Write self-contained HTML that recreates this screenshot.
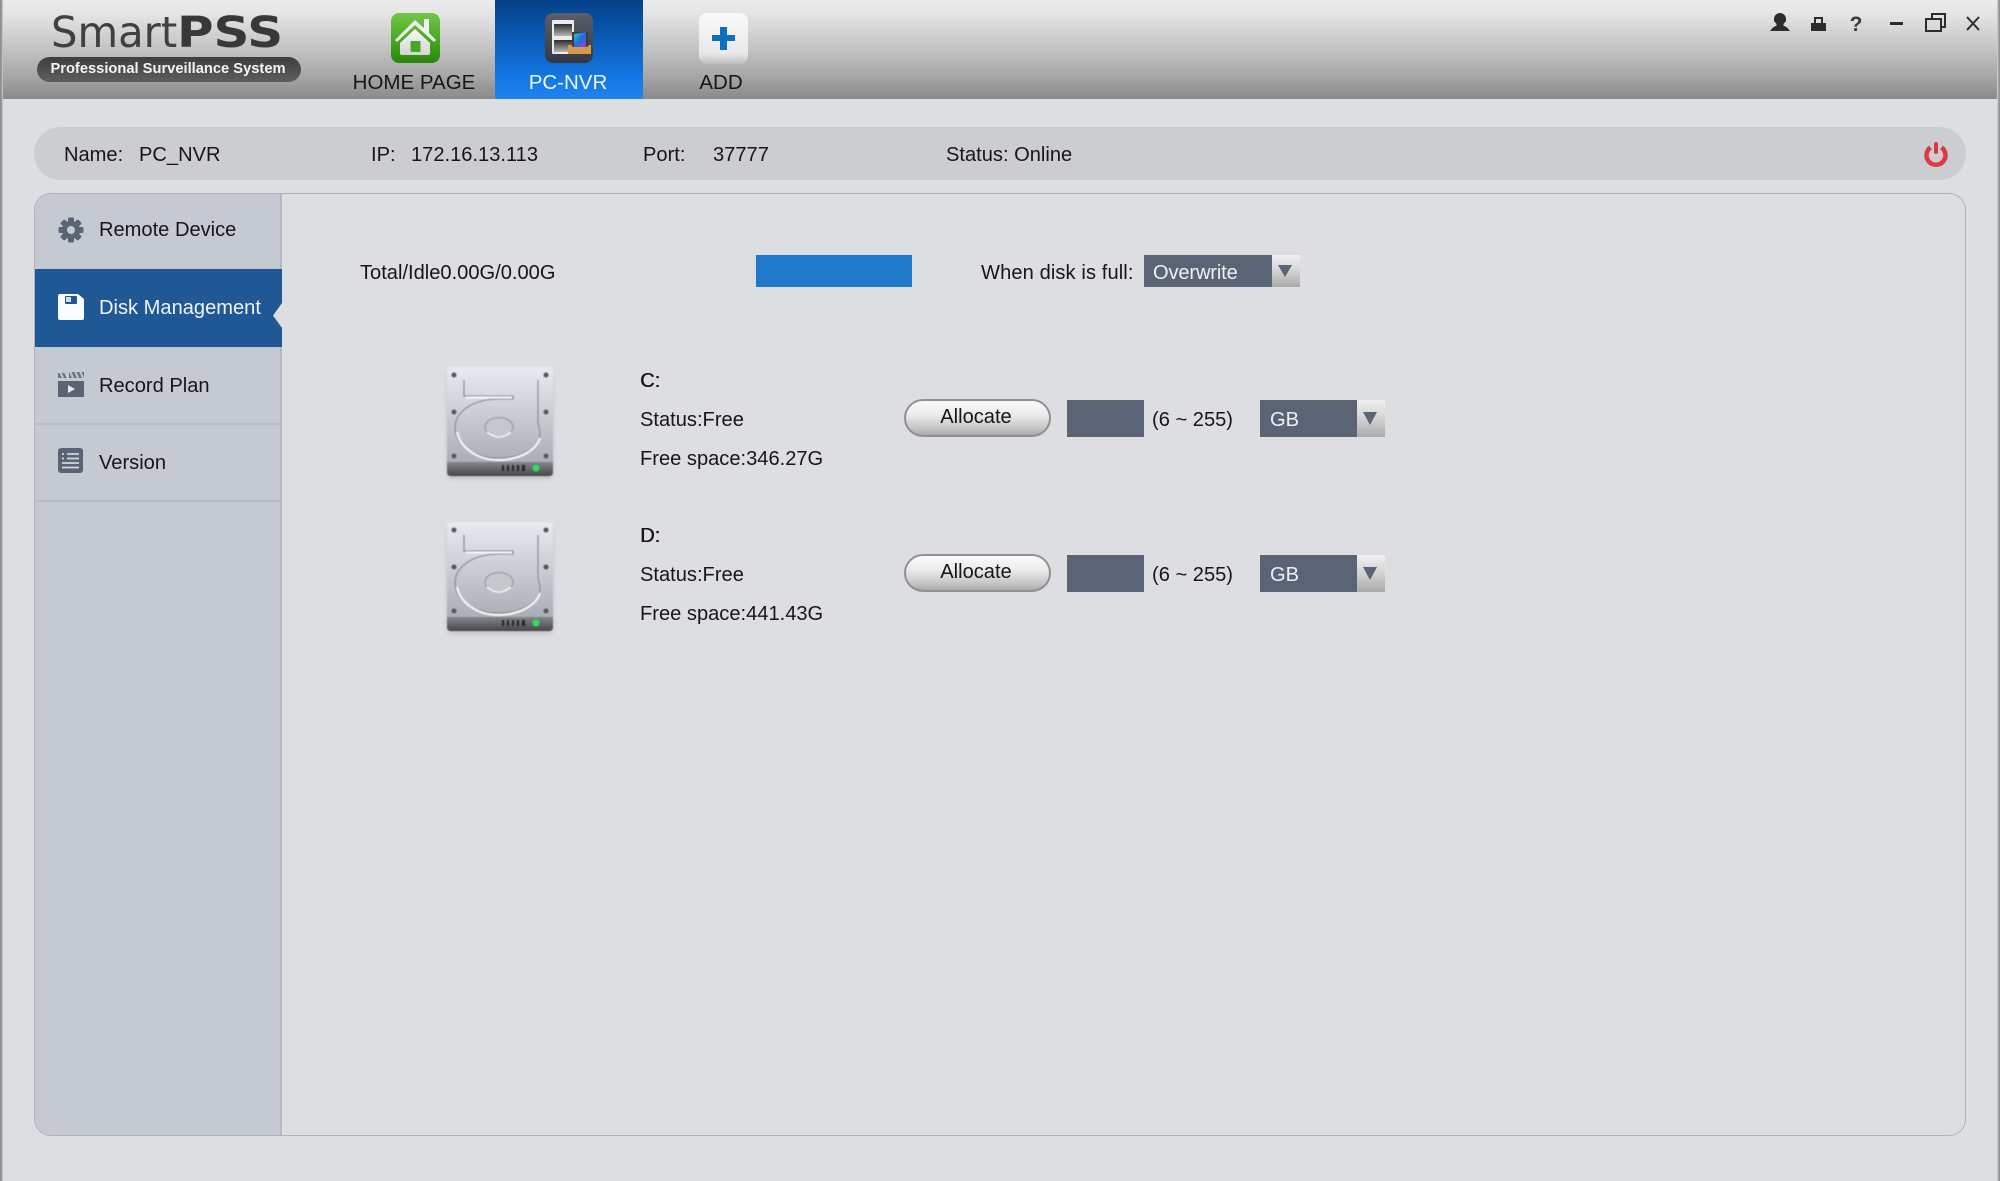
<!DOCTYPE html>
<html><head><meta charset="utf-8"><title>SmartPSS</title>
<style>
*{box-sizing:border-box}
html,body{margin:0;padding:0;width:2000px;height:1181px;overflow:hidden;background:#dcdee1}
body{font-family:"Liberation Sans",Arial,sans-serif;font-size:20.1px;color:#16161a;position:relative;filter:blur(.35px)}
.a{position:absolute;white-space:nowrap}
.t{line-height:24px}
#edgeL{left:0;top:0;width:3px;height:1181px;background:linear-gradient(90deg,#8a8c90,#9a9c9f 60%,#dcdee1)}
#edgeR{right:0;top:0;width:3px;height:1181px;background:linear-gradient(270deg,#8a8c90,#a0a2a5 50%,#dcdee1)}
#top{left:0;top:0;width:2000px;height:99px;background:linear-gradient(180deg,#ececec 0,#e4e4e4 15%,#c8c8c8 45%,#a6a6a6 80%,#909090 97%);border-bottom:3px solid #8b8c8e}
#tab{left:495px;top:0;width:148px;height:99px;background:linear-gradient(180deg,#044188 0,#0a5cb6 40%,#1478e6 80%,#2184ec 100%)}
.lbl{top:71px;line-height:24px;font-size:20.5px;transform:translateX(-50%);color:#15151a}
#info{left:34px;top:127px;width:1932px;height:53px;border-radius:27px;background:#cbcdd1}
#panel{left:34px;top:193px;width:1932px;height:943px;border:1px solid #aeb2b9;border-radius:17px;background:#dcdee1;overflow:hidden}
#side{left:0;top:0;width:247px;height:941px;background:#c5c9d2;border-right:2px solid #b4b9c2}
.sl{left:0;width:245px;height:2px;background:#b9bdc6}
#active{left:0;top:75px;width:247px;height:78px;background:#205795}
.bar{background:#5b6475}
.arr{background:linear-gradient(180deg,#f0f0f0,#d6d6d6 45%,#a9aaab)}
.btn{width:147px;height:38px;border-radius:19px;border:2px solid #8f9091;background:linear-gradient(180deg,#fafafa,#ececec 40%,#c5c5c5 80%,#a9a9a9);text-align:center;line-height:33px;color:#15151a;padding-right:3px}
.logo{font-family:"DejaVu Sans","Liberation Sans",sans-serif;font-size:43px;line-height:54px;color:#404042;transform-origin:0 0}
</style></head>
<body>
<div class="a" id="top"></div>
<div class="a" id="tab"></div>

<!-- Logo -->
<div class="a logo" style="left:51px;top:6px;transform:scaleX(.97)">Smart</div>
<div class="a logo" style="left:177px;top:6px;font-weight:700;color:#38383a;transform:scaleX(1.16)">PSS</div>
<div class="a" style="left:37px;top:57px;width:264px;height:25px;border-radius:13px;background:linear-gradient(180deg,#3e3e40,#5e5e60);color:#f4f4f4;font-weight:700;font-size:14.7px;line-height:25px;text-align:center;padding-right:2px">Professional Surveillance System</div>

<!-- Home icon -->
<svg class="a" style="left:390px;top:12px" width="52" height="54" viewBox="0 0 52 54">
<defs><linearGradient id="g" x1="0" y1="0" x2="0" y2="1"><stop offset="0" stop-color="#72c648"/><stop offset=".55" stop-color="#46a822"/><stop offset="1" stop-color="#2a860c"/></linearGradient>
<linearGradient id="h" x1="0" y1="0" x2="0" y2="1"><stop offset="0" stop-color="#f8f8f8"/><stop offset="1" stop-color="#d4d4d4"/></linearGradient></defs>
<rect x="1" y="1" width="49" height="50" rx="8" fill="url(#g)"/>
<path d="M5 28 L25 8 L34 16 L34 7 L39 7 L39 21 L46 28 L44 30 L25 13 L7 30Z" fill="#f0f0f0"/>
<path d="M10 31 L25 17 L40 31 V41 Q40 43 38 43 H12 Q10 43 10 41Z" fill="url(#h)"/>
<rect x="20.500" y="29" width="10" height="11" rx="1" fill="#47a828"/>
</svg>

<!-- PC-NVR icon -->
<svg class="a" style="left:543px;top:12px" width="52" height="54" viewBox="0 0 52 54">
<defs><linearGradient id="p" x1="0" y1="0" x2="0" y2="1"><stop offset="0" stop-color="#5a5e6a"/><stop offset="1" stop-color="#343842"/></linearGradient>
<linearGradient id="f" x1="0" y1="0" x2="1" y2="1"><stop offset="0" stop-color="#2fd0c8"/><stop offset=".5" stop-color="#1f6fe0"/><stop offset="1" stop-color="#a040c0"/></linearGradient>
<linearGradient id="d" x1="0" y1="0" x2="0" y2="1"><stop offset="0" stop-color="#2a2a2a"/><stop offset="1" stop-color="#b5b5b5"/></linearGradient></defs>
<rect x="2" y="1" width="48" height="50" rx="8" fill="url(#p)"/>
<rect x="9" y="8" width="22" height="34" rx="1" fill="#ececec"/>
<rect x="11" y="12" width="18" height="12" fill="url(#d)"/>
<rect x="11" y="28" width="18" height="12" fill="url(#d)"/>
<rect x="29" y="20" width="16" height="15" fill="#3a3d40"/>
<path d="M31 22 L43 20 V35 H31Z" fill="url(#f)"/>
<path d="M25 33 H28 L30 35 H44 L46 33 H48 V42 H25Z" fill="#d59a4a"/>
</svg>

<!-- Add icon -->
<svg class="a" style="left:698px;top:12px" width="52" height="54" viewBox="0 0 52 54">
<defs><linearGradient id="w" x1="0" y1="0" x2="0" y2="1"><stop offset="0" stop-color="#fafafa"/><stop offset=".8" stop-color="#e8e8e8"/><stop offset="1" stop-color="#bdbdbd"/></linearGradient></defs>
<rect x="1" y="1" width="49" height="51" rx="8" fill="url(#w)"/>
<path d="M22 15 H29 V23 H37 V29 H29 V38 H22 V29 H14 V23 H22Z" fill="#0f6fbe"/>
</svg>

<div class="a lbl" style="left:414px">HOME PAGE</div>
<div class="a lbl" style="left:568px;color:#eef5ff">PC-NVR</div>
<div class="a lbl" style="left:721px">ADD</div>

<!-- Window controls -->
<svg class="a" style="left:1760px;top:8px" width="230" height="30" viewBox="0 0 230 30" fill="#2c2c2e">
<path d="M20 5 a6 6 0 0 1 6 6 v2 l-2.500 3 v1.500 l3.500 2 l3 3.500 h-20 l3 -3.500 l3.500 -2 v-1.500 l-2.500 -3 v-2 a6 6 0 0 1 6 -6Z"/>
<rect x="51" y="15" width="15" height="8"/>
<rect x="55" y="10" width="7" height="6" fill="none" stroke="#2c2c2e" stroke-width="2"/>
<text x="96" y="23" font-family="Liberation Sans" font-size="21" font-weight="700" fill="#3a3a3c" text-anchor="middle">?</text>
<rect x="130" y="14" width="13" height="3"/>
<path d="M172 10 V6 H185 V19 H181" fill="none" stroke="#2c2c2e" stroke-width="2"/>
<rect x="166" y="11" width="15" height="12" fill="none" stroke="#2c2c2e" stroke-width="2"/>
<path d="M207 9 L219 22 M219 9 L207 22" stroke="#2c2c2e" stroke-width="2" fill="none"/>
</svg>

<!-- Info bar -->
<div class="a" id="info"></div>
<div class="a t" style="left:64px;top:143px">Name:</div>
<div class="a t" style="left:139px;top:143px">PC_NVR</div>
<div class="a t" style="left:371px;top:143px">IP:</div>
<div class="a t" style="left:411px;top:143px">172.16.13.113</div>
<div class="a t" style="left:643px;top:143px">Port:</div>
<div class="a t" style="left:713px;top:143px">37777</div>
<div class="a t" style="left:946px;top:143px">Status: Online</div>
<svg class="a" style="left:1922px;top:139px" width="28" height="30" viewBox="0 0 28 30">
<path d="M8.500 8.500 A9.500 9.500 0 1 0 19.500 8.500" fill="none" stroke="#da3a40" stroke-width="4.500"/>
<rect x="12" y="3" width="4" height="12" rx="2" fill="#da3a40"/>
</svg>

<!-- Panel -->
<div class="a" id="panel">
  <div class="a" id="side"></div>
  <div class="a" id="active"></div>
  <div class="a sl" style="top:229px"></div>
  <div class="a sl" style="top:306px"></div>
  <svg class="a" style="left:238px;top:109px" width="9" height="25" viewBox="0 0 9 25"><path d="M9 0 L0 12.500 L9 25Z" fill="#dcdee1"/></svg>
  <div class="a t" style="left:64px;top:24px">Remote Device</div>
  <div class="a t" style="left:64px;top:102px;color:#eef3fb">Disk Management</div>
  <div class="a t" style="left:64px;top:180px">Record Plan</div>
  <div class="a t" style="left:64px;top:257px">Version</div>
  <!-- gear -->
  <svg class="a" style="left:22px;top:22px" width="28" height="28" viewBox="0 0 28 28">
    <g fill="#5b6475"><circle cx="14" cy="14" r="9"/>
    <g><rect x="11" y="1.500" width="6" height="25" rx="1.500"/><rect x="11" y="1.500" width="6" height="25" rx="1.500" transform="rotate(45 14 14)"/><rect x="11" y="1.500" width="6" height="25" rx="1.500" transform="rotate(90 14 14)"/><rect x="11" y="1.500" width="6" height="25" rx="1.500" transform="rotate(135 14 14)"/></g></g>
    <circle cx="14" cy="14" r="4" fill="#c5c9d2"/>
  </svg>
  <!-- floppy -->
  <svg class="a" style="left:22px;top:99px" width="28" height="28" viewBox="0 0 28 28">
    <path d="M3 1 H21 L27 6 V25 Q27 27 25 27 H3 Q1 27 1 25 V3 Q1 1 3 1Z" fill="#fafcff"/>
    <rect x="8" y="3" width="12" height="8" rx="1" fill="#205795"/><rect x="9" y="4" width="5" height="5" fill="#cfe0f4"/>
  </svg>
  <!-- clapper -->
  <svg class="a" style="left:22px;top:175px" width="28" height="30" viewBox="0 0 28 30">
    <rect x="1" y="12" width="26" height="16" fill="#5b6475"/>
    <path d="M1 4 H10 V9 H1Z M12 3 H27 V9 H12Z" fill="#5b6475" opacity=".85"/>
    <path d="M3 3 l3 6 M8 3 l3 6 M13 2 l3 7 M18 2 l3 7 M23 2 l3 7" stroke="#c5c9d2" stroke-width="2"/>
    <path d="M11 16 L18 20 L11 24Z" fill="#e6e8ec"/>
  </svg>
  <!-- list -->
  <svg class="a" style="left:22px;top:253px" width="28" height="28" viewBox="0 0 28 28">
    <rect x="1" y="1" width="25" height="25" rx="3" fill="#5b6475"/>
    <path d="M5 7 H7 M10 7 H22 M5 11.500 H7 M10 11.500 H22 M5 16 H22 M5 20.500 H22" stroke="#d4d7dd" stroke-width="1.800"/>
  </svg>
</div>

<!-- Disk top row -->
<div class="a t" style="left:360px;top:261px">Total/Idle0.00G/0.00G</div>
<div class="a" style="left:756px;top:255px;width:156px;height:32px;background:#1f78c8"></div>
<div class="a t" style="left:981px;top:261px;letter-spacing:.1px">When disk is full:</div>
<div class="a bar" style="left:1144px;top:255px;width:128px;height:32px"></div>
<div class="a t" style="left:1153px;top:261px;color:#eef0f4;letter-spacing:-.15px">Overwrite</div>
<div class="a arr" style="left:1272px;top:255px;width:28px;height:32px"></div>
<svg class="a" style="left:1277px;top:264px" width="16" height="14"><path d="M1 1 H15 L8 13Z" fill="#5b6475"/></svg>

<!-- Disk C -->
<svg class="a" style="left:440px;top:360px;filter:blur(.5px)" width="120" height="125" viewBox="0 0 120 125">
<defs><linearGradient id="hd" x1="0" y1="0" x2="0" y2="1"><stop offset="0" stop-color="#e8ebf1"/><stop offset=".5" stop-color="#c9ccd2"/><stop offset="1" stop-color="#a9adb4"/></linearGradient>
<linearGradient id="hb" x1="0" y1="0" x2="0" y2="1"><stop offset="0" stop-color="#85878b"/><stop offset="1" stop-color="#45464a"/></linearGradient>
<filter id="s" x="-10%" y="-10%" width="120%" height="125%"><feGaussianBlur stdDeviation="2.500"/></filter></defs>
<rect x="8" y="12" width="104" height="106" rx="4" fill="#888" opacity=".45" filter="url(#s)"/>
<rect x="7" y="7" width="106" height="97" rx="3" fill="url(#hd)"/>
<path d="M7 102 H113 V112 Q113 116 109 116 H11 Q7 116 7 112Z" fill="url(#hb)"/>
<g fill="#55585e"><circle cx="14" cy="15" r="2.500"/><circle cx="106" cy="15" r="2.500"/><circle cx="14" cy="52" r="2.500"/><circle cx="106" cy="52" r="2.500"/><circle cx="14" cy="96" r="2.500"/><circle cx="106" cy="96" r="2.500"/></g>
<path d="M24 20 V36 H73 V39 H60 C32 39 15 52 15 68 C15 86 36 98 58 98 C82 98 100 87 100 73 C100 69 98 66 98 62 V20" fill="none" stroke="#8f939a" stroke-width="1.300"/>
<path d="M26 37.500 H72 M17 72 C20 88 38 100 58 100 C80 100 96 90 100 78" fill="none" stroke="#f4f6f8" stroke-width="2.200"/>
<ellipse cx="59" cy="67" rx="14" ry="9.500" fill="#c4c7cc" stroke="#8f939a" stroke-width="1"/>
<path d="M47 72 Q59 82 71 72" fill="none" stroke="#f2f4f6" stroke-width="1.500"/>
<g fill="#25272b"><rect x="62" y="105" width="2" height="6"/><rect x="67" y="105" width="2" height="6"/><rect x="72" y="105" width="2" height="6"/><rect x="77" y="105" width="2" height="6"/><rect x="82" y="105" width="3" height="6"/></g>
<circle cx="96" cy="108" r="3.500" fill="#2fe05a"/>
</svg>
<div class="a t" style="left:640px;top:369px;text-shadow:.5px 0 0 #16161a">C:</div>
<div class="a t" style="left:640px;top:408px">Status:Free</div>
<div class="a t" style="left:640px;top:447px">Free space:346.27G</div>
<div class="a btn" style="left:904px;top:399px">Allocate</div>
<div class="a bar" style="left:1067px;top:400px;width:77px;height:37px"></div>
<div class="a t" style="left:1152px;top:408px">(6 ~ 255)</div>
<div class="a bar" style="left:1260px;top:400px;width:97px;height:37px"></div>
<div class="a t" style="left:1270px;top:408px;color:#eef0f4">GB</div>
<div class="a arr" style="left:1357px;top:400px;width:28px;height:37px"></div>
<svg class="a" style="left:1361px;top:411px" width="18" height="16"><path d="M2 1 H16 L9 14Z" fill="#5b6475"/></svg>

<!-- Disk D -->
<svg class="a" style="left:440px;top:515px;filter:blur(.5px)" width="120" height="125" viewBox="0 0 120 125">
<rect x="8" y="12" width="104" height="106" rx="4" fill="#888" opacity=".45" filter="url(#s)"/>
<rect x="7" y="7" width="106" height="97" rx="3" fill="url(#hd)"/>
<path d="M7 102 H113 V112 Q113 116 109 116 H11 Q7 116 7 112Z" fill="url(#hb)"/>
<g fill="#55585e"><circle cx="14" cy="15" r="2.500"/><circle cx="106" cy="15" r="2.500"/><circle cx="14" cy="52" r="2.500"/><circle cx="106" cy="52" r="2.500"/><circle cx="14" cy="96" r="2.500"/><circle cx="106" cy="96" r="2.500"/></g>
<path d="M24 20 V36 H73 V39 H60 C32 39 15 52 15 68 C15 86 36 98 58 98 C82 98 100 87 100 73 C100 69 98 66 98 62 V20" fill="none" stroke="#8f939a" stroke-width="1.300"/>
<path d="M26 37.500 H72 M17 72 C20 88 38 100 58 100 C80 100 96 90 100 78" fill="none" stroke="#f4f6f8" stroke-width="2.200"/>
<ellipse cx="59" cy="67" rx="14" ry="9.500" fill="#c4c7cc" stroke="#8f939a" stroke-width="1"/>
<path d="M47 72 Q59 82 71 72" fill="none" stroke="#f2f4f6" stroke-width="1.500"/>
<g fill="#25272b"><rect x="62" y="105" width="2" height="6"/><rect x="67" y="105" width="2" height="6"/><rect x="72" y="105" width="2" height="6"/><rect x="77" y="105" width="2" height="6"/><rect x="82" y="105" width="3" height="6"/></g>
<circle cx="96" cy="108" r="3.500" fill="#2fe05a"/>
</svg>
<div class="a t" style="left:640px;top:524px;text-shadow:.5px 0 0 #16161a">D:</div>
<div class="a t" style="left:640px;top:563px">Status:Free</div>
<div class="a t" style="left:640px;top:602px">Free space:441.43G</div>
<div class="a btn" style="left:904px;top:554px">Allocate</div>
<div class="a bar" style="left:1067px;top:555px;width:77px;height:37px"></div>
<div class="a t" style="left:1152px;top:563px">(6 ~ 255)</div>
<div class="a bar" style="left:1260px;top:555px;width:97px;height:37px"></div>
<div class="a t" style="left:1270px;top:563px;color:#eef0f4">GB</div>
<div class="a arr" style="left:1357px;top:555px;width:28px;height:37px"></div>
<svg class="a" style="left:1361px;top:566px" width="18" height="16"><path d="M2 1 H16 L9 14Z" fill="#5b6475"/></svg>

<div class="a" id="edgeL"></div>
<div class="a" id="edgeR"></div>
</body></html>
